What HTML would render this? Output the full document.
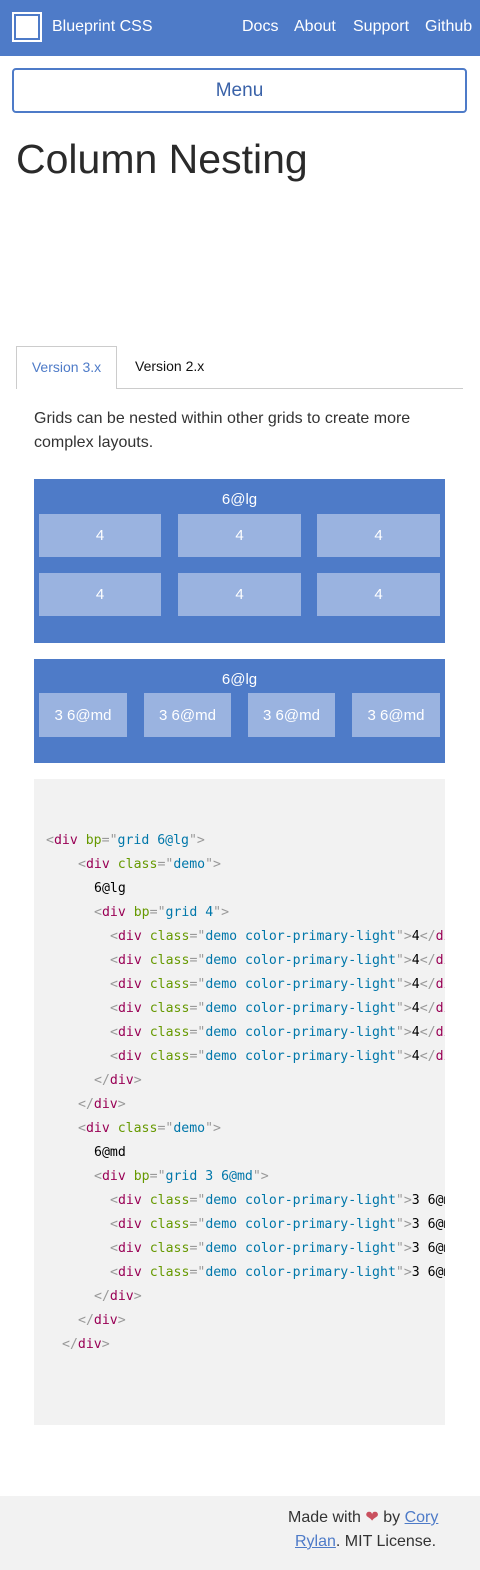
<!DOCTYPE html>
<html><head><meta charset="utf-8"><style>
*{margin:0;padding:0;box-sizing:border-box}
body{width:480px;height:1570px;position:relative;font-family:"Liberation Sans",sans-serif;background:#fff;overflow:hidden;color:#222}
.a{position:absolute}
.nav{left:0;top:0;width:480px;height:56px;background:#4e7bc8;color:#fff;font-size:16px}
.cell{position:absolute;background:#9ab3e0;color:#fff;font-size:15px;display:flex;align-items:center;justify-content:center}
.box{background:#4e7bc8;color:#fff}
.code{left:34px;top:779px;width:411px;height:646px;background:#f2f2f2;overflow:hidden;font-family:"DejaVu Sans Mono","Liberation Mono",monospace;font-size:13.2px}
.code div{position:absolute;white-space:pre;height:24px;line-height:24px;color:#000}
.t{color:#905}.p{color:#999}.at{color:#690}.s{color:#07a}
</style></head><body>
<div class="a nav">
 <div class="a" style="left:12px;top:12px;width:30px;height:30px;border:2px solid #fff;"><div style="margin:2px;width:22px;height:22px;background:#fff"></div></div>
 <div class="a" style="left:52px;top:18px">Blueprint CSS</div>
 <div class="a" style="left:242px;top:18px">Docs</div>
 <div class="a" style="left:294px;top:18px">About</div>
 <div class="a" style="left:353px;top:18px">Support</div>
 <div class="a" style="left:425px;top:18px">Github</div>
</div>
<div class="a" style="left:12px;top:68px;width:455px;height:45px;border:2px solid #4e7bc8;border-radius:4px;color:#3a62a8;font-size:19px;text-align:center;line-height:41px">Menu</div>
<div class="a" style="left:16px;top:136px;font-size:41px;font-weight:300;color:#2a2a2a">Column Nesting</div>
<div class="a" style="left:16px;top:388px;width:447px;height:1px;background:#ccc"></div>
<div class="a" style="left:16px;top:346px;width:101px;height:43px;border:1px solid #ccc;border-bottom:none;background:#fff;color:#4e7bc8;font-size:14px;text-align:center;line-height:40px">Version 3.x</div>
<div class="a" style="left:135px;top:358px;font-size:14px;color:#111">Version 2.x</div>
<div class="a" style="left:34px;top:407px;width:400px;font-size:16px;line-height:24px;color:#333">Grids can be nested within other grids to create more complex layouts.</div>

<div class="a box" style="left:34px;top:479px;width:411px;height:164px">
 <div class="a" style="left:0;width:411px;top:12px;text-align:center;font-size:15px">6@lg</div>
 <div class="cell" style="left:5px;top:35px;width:122px;height:43px">4</div>
 <div class="cell" style="left:144px;top:35px;width:123px;height:43px">4</div>
 <div class="cell" style="left:283px;top:35px;width:123px;height:43px">4</div>
 <div class="cell" style="left:5px;top:94px;width:122px;height:43px">4</div>
 <div class="cell" style="left:144px;top:94px;width:123px;height:43px">4</div>
 <div class="cell" style="left:283px;top:94px;width:123px;height:43px">4</div>
</div>
<div class="a box" style="left:34px;top:659px;width:411px;height:104px">
 <div class="a" style="left:0;width:411px;top:12px;text-align:center;font-size:15px">6@lg</div>
 <div class="cell" style="left:5px;top:34px;width:88px;height:44px">3 6@md</div>
 <div class="cell" style="left:110px;top:34px;width:87px;height:44px">3 6@md</div>
 <div class="cell" style="left:214px;top:34px;width:87px;height:44px">3 6@md</div>
 <div class="cell" style="left:318px;top:34px;width:88px;height:44px">3 6@md</div>
</div>

<div class="a code">
<div style="left:12px;top:50px"><span class="p">&lt;</span><span class="t">div</span> <span class="at">bp</span><span class="p">="</span><span class="s">grid 6@lg</span><span class="p">"&gt;</span></div>
<div style="left:44px;top:74px"><span class="p">&lt;</span><span class="t">div</span> <span class="at">class</span><span class="p">="</span><span class="s">demo</span><span class="p">"&gt;</span></div>
<div style="left:60px;top:98px">6@lg</div>
<div style="left:60px;top:122px"><span class="p">&lt;</span><span class="t">div</span> <span class="at">bp</span><span class="p">="</span><span class="s">grid 4</span><span class="p">"&gt;</span></div>
<div style="left:76px;top:146px"><span class="p">&lt;</span><span class="t">div</span> <span class="at">class</span><span class="p">="</span><span class="s">demo color-primary-light</span><span class="p">"&gt;</span>4<span class="p">&lt;/</span><span class="t">div</span><span class="p">&gt;</span></div>
<div style="left:76px;top:170px"><span class="p">&lt;</span><span class="t">div</span> <span class="at">class</span><span class="p">="</span><span class="s">demo color-primary-light</span><span class="p">"&gt;</span>4<span class="p">&lt;/</span><span class="t">div</span><span class="p">&gt;</span></div>
<div style="left:76px;top:194px"><span class="p">&lt;</span><span class="t">div</span> <span class="at">class</span><span class="p">="</span><span class="s">demo color-primary-light</span><span class="p">"&gt;</span>4<span class="p">&lt;/</span><span class="t">div</span><span class="p">&gt;</span></div>
<div style="left:76px;top:218px"><span class="p">&lt;</span><span class="t">div</span> <span class="at">class</span><span class="p">="</span><span class="s">demo color-primary-light</span><span class="p">"&gt;</span>4<span class="p">&lt;/</span><span class="t">div</span><span class="p">&gt;</span></div>
<div style="left:76px;top:242px"><span class="p">&lt;</span><span class="t">div</span> <span class="at">class</span><span class="p">="</span><span class="s">demo color-primary-light</span><span class="p">"&gt;</span>4<span class="p">&lt;/</span><span class="t">div</span><span class="p">&gt;</span></div>
<div style="left:76px;top:266px"><span class="p">&lt;</span><span class="t">div</span> <span class="at">class</span><span class="p">="</span><span class="s">demo color-primary-light</span><span class="p">"&gt;</span>4<span class="p">&lt;/</span><span class="t">div</span><span class="p">&gt;</span></div>
<div style="left:60px;top:290px"><span class="p">&lt;/</span><span class="t">div</span><span class="p">&gt;</span></div>
<div style="left:44px;top:314px"><span class="p">&lt;/</span><span class="t">div</span><span class="p">&gt;</span></div>
<div style="left:44px;top:338px"><span class="p">&lt;</span><span class="t">div</span> <span class="at">class</span><span class="p">="</span><span class="s">demo</span><span class="p">"&gt;</span></div>
<div style="left:60px;top:362px">6@md</div>
<div style="left:60px;top:386px"><span class="p">&lt;</span><span class="t">div</span> <span class="at">bp</span><span class="p">="</span><span class="s">grid 3 6@md</span><span class="p">"&gt;</span></div>
<div style="left:76px;top:410px"><span class="p">&lt;</span><span class="t">div</span> <span class="at">class</span><span class="p">="</span><span class="s">demo color-primary-light</span><span class="p">"&gt;</span>3 6@md<span class="p">&lt;/</span><span class="t">div</span><span class="p">&gt;</span></div>
<div style="left:76px;top:434px"><span class="p">&lt;</span><span class="t">div</span> <span class="at">class</span><span class="p">="</span><span class="s">demo color-primary-light</span><span class="p">"&gt;</span>3 6@md<span class="p">&lt;/</span><span class="t">div</span><span class="p">&gt;</span></div>
<div style="left:76px;top:458px"><span class="p">&lt;</span><span class="t">div</span> <span class="at">class</span><span class="p">="</span><span class="s">demo color-primary-light</span><span class="p">"&gt;</span>3 6@md<span class="p">&lt;/</span><span class="t">div</span><span class="p">&gt;</span></div>
<div style="left:76px;top:482px"><span class="p">&lt;</span><span class="t">div</span> <span class="at">class</span><span class="p">="</span><span class="s">demo color-primary-light</span><span class="p">"&gt;</span>3 6@md<span class="p">&lt;/</span><span class="t">div</span><span class="p">&gt;</span></div>
<div style="left:60px;top:506px"><span class="p">&lt;/</span><span class="t">div</span><span class="p">&gt;</span></div>
<div style="left:44px;top:530px"><span class="p">&lt;/</span><span class="t">div</span><span class="p">&gt;</span></div>
<div style="left:28px;top:554px"><span class="p">&lt;/</span><span class="t">div</span><span class="p">&gt;</span></div>
</div>

<div class="a" style="left:0;top:1496px;width:480px;height:74px;background:#f2f2f2;font-size:16px;color:#333;line-height:24px">
 <div class="a" style="left:288px;top:10px;white-space:nowrap">Made with <span style="color:#c9505e">&#10084;</span> by <span style="color:#4e7bc8;text-decoration:underline">Cory</span></div>
 <div class="a" style="left:295px;top:34px;white-space:nowrap"><span style="color:#4e7bc8;text-decoration:underline">Rylan</span>. MIT License.</div>
</div>
</body></html>
